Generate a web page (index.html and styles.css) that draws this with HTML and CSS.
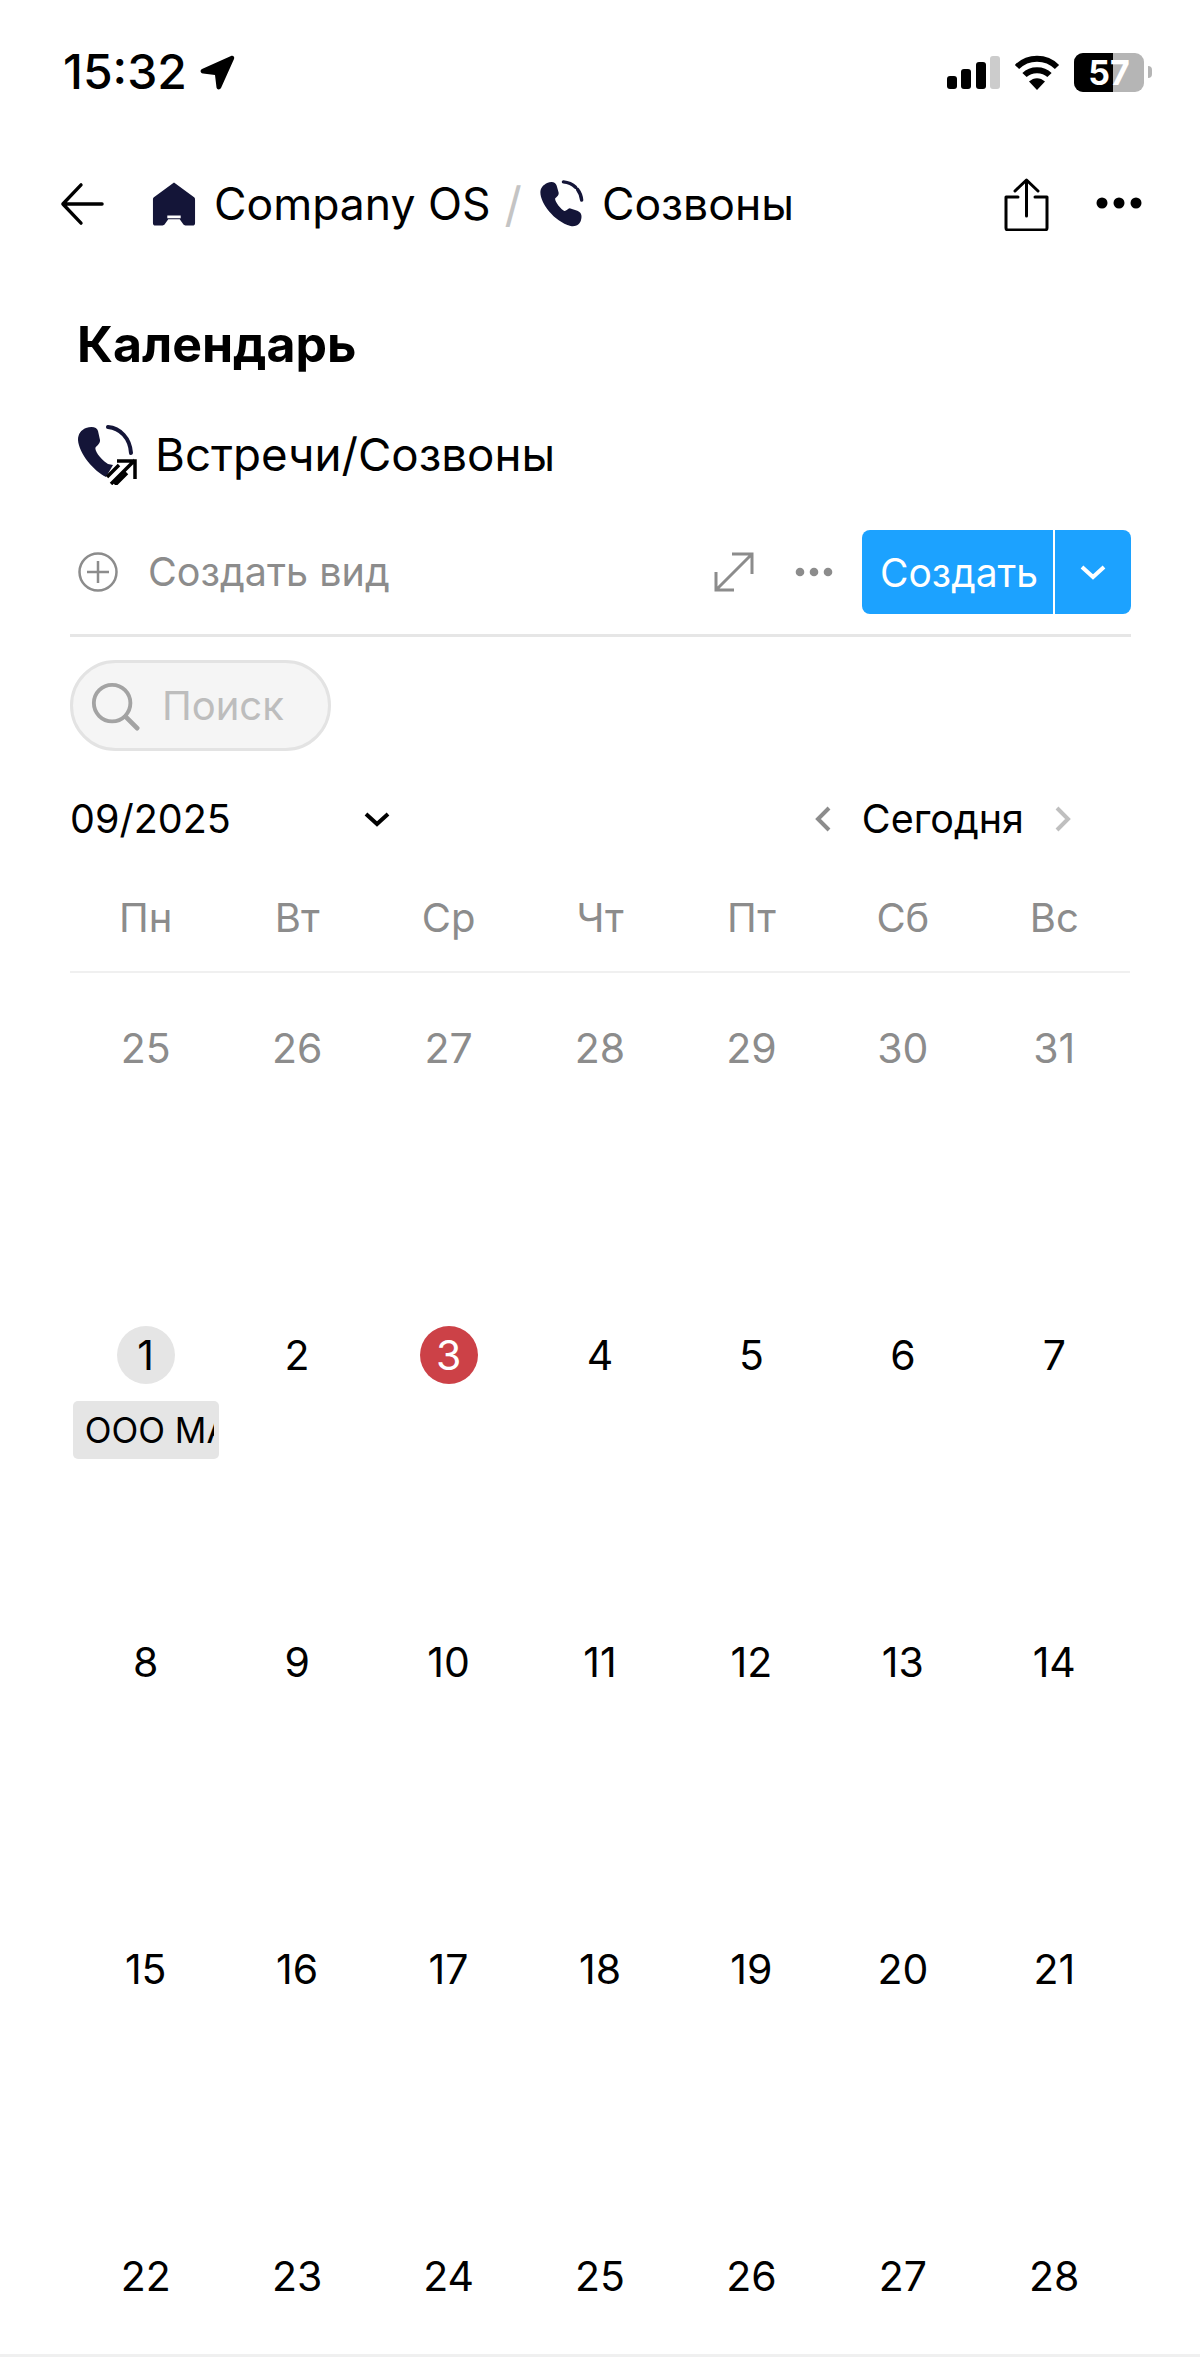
FILE: index.html
```html
<!DOCTYPE html>
<html lang="ru">

<head>
  <meta charset="UTF-8">
  <meta name="viewport" content="width=device-width, initial-scale=1.0">
  <title>Календарь</title>
  <link rel="stylesheet" href="styles.css">
</head>

<body>
  <div class="status-bar">
    <div class="status-left">
      <span class="status-time">15:32</span>
      <svg width="35" height="35" viewBox="0 0 35 35"><path d="M2 14 31 1c2-1 4 1 3 3L21 33c-1 2-4 2-4.500-.5L15 20 3 18.500C0 18 0 15 2 14Z" fill="#000"/></svg>
    </div>
    <div class="status-right">
      <svg width="53" height="33" viewBox="0 0 53 33"><rect x="0" y="20" width="10" height="13" rx="3" fill="#000"/><rect x="14" y="13" width="10" height="20" rx="3" fill="#000"/><rect x="29" y="6" width="10" height="27" rx="3" fill="#000"/><rect x="43" y="0" width="10" height="33" rx="3" fill="#ccc"/></svg>
      <svg width="48" height="36" viewBox="0 0 46 36"><path d="M3 13C14 2 32 2 43 13M10.500 21C17 14.500 29 14.500 35.500 21" fill="none" stroke="#000" stroke-width="6"/><path d="M15 27.500C20 23 26 23 31 27.500L23 36Z" fill="#000"/></svg>
      <div class="battery">
        <div class="battery-body">
          <div class="battery-fill"></div>
          <span class="battery-num">57</span>
        </div>
        <div class="battery-tip"></div>
      </div>
    </div>
  </div>

  <div class="nav-bar">
    <svg class="back-icon" width="44" height="44" viewBox="0 0 46 46"><path d="M44 23H3M22 3 3 23l19 20" fill="none" stroke="#000" stroke-width="3.500" stroke-linecap="round" stroke-linejoin="round"/></svg>
    <svg class="crumb-icon" width="44" height="44" viewBox="0 0 46 46"><path fill-rule="evenodd" d="M23 .5 44 16c.6.500 1 1.200 1 2v25c0 1.500-1 2.500-2.500 2.500H35c-1 0-1.800-.5-2.300-1.200L29 39H17l-3.700 5.300c-.5.700-1.300 1.200-2.300 1.200H3.500C2 45.500 1 44.500 1 43V18c0-.8.400-1.500 1-2L23 .5ZM16 35v3h14v-3H16Z" fill="#141538"/></svg>
    <span class="crumb-text">Company OS</span>
    <span class="crumb-sep">/</span>
    <svg class="crumb-icon" width="47" height="48" viewBox="0 0 46 50"><path d="M8 3c5-2 9-1 10 3l2 7c.5 3-2 4.500-3.500 6-1 1.500 3 9 9 13 2 1 4-2 6-2.500l8 2.500c4 1.500 5 5 4 9-1 6-6 8-11 7C15 43 1 24 1 13 1 8 4 5 8 3Z" fill="#141538"/><path d="M25 2c11 1 18 9 19 19" fill="none" stroke="#141538" stroke-width="3.500" stroke-linecap="round" stroke-dasharray="14 3 40"/></svg>
    <span class="crumb-text crumb-last">Созвоны</span>
    <div class="nav-actions">
      <svg width="45" height="53" viewBox="0 0 45 53"><path d="M22.500 38V2M11 13 22.500 2 34 13M14 19H2v31a2 2 0 0 0 2 2h37a2 2 0 0 0 2-2V19H31" fill="none" stroke="#000" stroke-width="3" stroke-linecap="round" stroke-linejoin="round"/></svg>
      <svg class="nav-dots" width="46" height="12" viewBox="0 0 46 12"><circle cx="6" cy="6" r="5.500" fill="#000"/><circle cx="23" cy="6" r="5.500" fill="#000"/><circle cx="40" cy="6" r="5.500" fill="#000"/></svg>
    </div>
  </div>

  <h1 class="page-title">Календарь</h1>

  <div class="db-title">
    <svg width="60" height="60" viewBox="0 0 60 60"><path d="M9 3c6-2 11-1 12 3l2 9c.5 3-3 6-4.500 7.500C17.500 25 22 33 31 39l5 1-7 12C17 46 2 29 1 15 1 9 4 5 9 3Z" fill="#141538"/><path d="M31 2c12 1 22 11 23 26" fill="none" stroke="#141538" stroke-width="4" stroke-linecap="round"/><path d="M34 59 58 35M40 36h18v18M30 52l12-12M38 60l12-12" fill="none" stroke="#000" stroke-width="3.500"/></svg>
    <span>Встречи/Созвоны</span>
  </div>

  <div class="toolbar">
    <svg width="40" height="40" viewBox="0 0 40 40"><circle cx="20" cy="20" r="18.500" fill="none" stroke="#8c8c8c" stroke-width="2.500"/><path d="M20 9v22M9 20h22" stroke="#8c8c8c" stroke-width="2.500"/></svg>
    <span class="toolbar-label">Создать вид</span>
    <div class="toolbar-right">
      <svg width="40" height="40" viewBox="0 0 40 40"><path d="M37 3 3 37M18 2h20v20M2 20v18h18" fill="none" stroke="#8c8c8c" stroke-width="3"/></svg>
      <svg class="toolbar-dots" width="38" height="10" viewBox="0 0 38 10"><circle cx="5" cy="5" r="4.300" fill="#8c8c8c"/><circle cx="19" cy="5" r="4.300" fill="#8c8c8c"/><circle cx="33" cy="5" r="4.300" fill="#8c8c8c"/></svg>
      <div class="create-btn">
        <span class="create-main">Создать</span>
        <span class="create-more"><svg width="26" height="16" viewBox="0 0 26 16"><path d="M2 3 13 13 24 3" fill="none" stroke="#fff" stroke-width="4"/></svg></span>
      </div>
    </div>
  </div>

  <div class="search-box">
    <svg width="50" height="50" viewBox="0 0 52 52"><circle cx="23" cy="23" r="19" fill="none" stroke="#a3a3a3" stroke-width="4"/><path d="M37 37 49 49" stroke="#a3a3a3" stroke-width="5" stroke-linecap="round"/></svg>
    <span>Поиск</span>
  </div>

  <div class="month-bar">
    <div class="month-pick">
      <span>09/2025</span>
      <svg width="26" height="16" viewBox="0 0 26 16"><path d="M2 3 13 13 24 3" fill="none" stroke="#000" stroke-width="4"/></svg>
    </div>
    <div class="month-nav">
      <svg width="16" height="26" viewBox="0 0 16 26"><path d="M14 2 3 13l11 11" fill="none" stroke="#8c8c8c" stroke-width="4"/></svg>
      <span>Сегодня</span>
      <svg width="16" height="26" viewBox="0 0 16 26"><path d="M2 2l11 11L2 24" fill="none" stroke="#bfbfbf" stroke-width="4"/></svg>
    </div>
  </div>

  <div class="week-head">
    <div>Пн</div><div>Вт</div><div>Ср</div><div>Чт</div><div>Пт</div><div>Сб</div><div>Вс</div>
  </div>

  <div class="calendar">
    <div class="day muted"><span class="num">25</span></div>
    <div class="day muted"><span class="num">26</span></div>
    <div class="day muted"><span class="num">27</span></div>
    <div class="day muted"><span class="num">28</span></div>
    <div class="day muted"><span class="num">29</span></div>
    <div class="day muted"><span class="num">30</span></div>
    <div class="day muted"><span class="num">31</span></div>

    <div class="day"><span class="num first">1</span><div class="event"><span>ООО МАРКЕТ</span></div></div>
    <div class="day"><span class="num">2</span></div>
    <div class="day"><span class="num today">3</span></div>
    <div class="day"><span class="num">4</span></div>
    <div class="day"><span class="num">5</span></div>
    <div class="day"><span class="num">6</span></div>
    <div class="day"><span class="num">7</span></div>

    <div class="day"><span class="num">8</span></div>
    <div class="day"><span class="num">9</span></div>
    <div class="day"><span class="num">10</span></div>
    <div class="day"><span class="num">11</span></div>
    <div class="day"><span class="num">12</span></div>
    <div class="day"><span class="num">13</span></div>
    <div class="day"><span class="num">14</span></div>

    <div class="day"><span class="num">15</span></div>
    <div class="day"><span class="num">16</span></div>
    <div class="day"><span class="num">17</span></div>
    <div class="day"><span class="num">18</span></div>
    <div class="day"><span class="num">19</span></div>
    <div class="day"><span class="num">20</span></div>
    <div class="day"><span class="num">21</span></div>

    <div class="day"><span class="num">22</span></div>
    <div class="day"><span class="num">23</span></div>
    <div class="day"><span class="num">24</span></div>
    <div class="day"><span class="num">25</span></div>
    <div class="day"><span class="num">26</span></div>
    <div class="day"><span class="num">27</span></div>
    <div class="day"><span class="num">28</span></div>
  </div>

  <div class="bottom-line"></div>
</body>

</html>
```

FILE: styles.css
```css
html,
body {
  margin: 0;
  padding: 0;
}

body {
  width: 1200px;
  height: 2378px;
  overflow: hidden;
  background: #fff;
  color: #000;
  font-family: 'Inter', 'Liberation Sans', sans-serif;
}

/* status bar */
.status-bar {
  display: flex;
  justify-content: space-between;
  align-items: center;
  height: 56px;
  padding: 44px 48px 0 63px;
}

.status-left {
  display: flex;
  align-items: center;
  gap: 13px;
}

.status-time {
  font-size: 48px;
  font-weight: 500;
  line-height: 56px;
}

.status-right {
  display: flex;
  align-items: center;
  gap: 13px;
}

.battery {
  display: flex;
  align-items: center;
  gap: 4px;
}

.battery-body {
  position: relative;
  width: 70px;
  height: 39px;
  border-radius: 9px;
  overflow: hidden;
  background: #b5b5b5;
}

.battery-fill {
  width: 39px;
  height: 100%;
  background: #000;
}

.battery-num {
  position: absolute;
  left: 0;
  right: 0;
  top: 0;
  text-align: center;
  color: #fff;
  font-size: 34px;
  font-weight: 700;
  line-height: 39px;
}

.battery-tip {
  width: 4px;
  height: 12px;
  border-radius: 0 4px 4px 0;
  background: #b5b5b5;
}

/* breadcrumbs */
.nav-bar {
  display: flex;
  align-items: center;
  height: 60px;
  margin-top: 74px;
  padding: 0 58px 0 60px;
}

.back-icon {
  margin-right: 48px;
}

.crumb-icon {
  flex: none;
}

.crumb-text {
  font-size: 44.500px;
  margin-left: 18px;
}

.crumb-last {
  margin-left: 17px;
}

.crumb-sep {
  font-size: 48px;
  color: #c4c4c4;
  margin: 0 16px 0 14px;
}

.nav-actions {
  display: flex;
  align-items: center;
  gap: 47px;
  margin-left: auto;
}

.nav-dots {
  margin-bottom: 3px;
}

/* titles */
.page-title {
  margin: 80px 0 0 77px;
  font-size: 50px;
  font-weight: 700;
  line-height: 60px;
}

.db-title {
  display: flex;
  align-items: center;
  gap: 18px;
  margin: 51px 0 0 77px;
  font-size: 45.700px;
  line-height: 60px;
}

/* toolbar */
.toolbar {
  display: flex;
  align-items: center;
  height: 84px;
  margin: 45px 69px 0 70px;
  padding: 0 0 20px 8px;
  border-bottom: 3px solid #e6e6e6;
}

.toolbar-label {
  margin-left: 30px;
  font-size: 39.500px;
  color: #8c8c8c;
}

.toolbar-right {
  display: flex;
  align-items: center;
  margin-left: auto;
}

.toolbar-dots {
  margin: 0 29px 0 41px;
}

.create-btn {
  display: flex;
  height: 84px;
  border-radius: 8px;
  overflow: hidden;
  color: #fff;
  background: #1ca2ff;
}

.create-main {
  display: flex;
  align-items: center;
  box-sizing: border-box;
  width: 193px;
  padding-left: 18px;
  font-size: 39px;
  border-right: 2px solid #fff;
}

.create-more {
  display: flex;
  align-items: center;
  justify-content: center;
  width: 76px;
}

/* search */
.search-box {
  display: flex;
  align-items: center;
  gap: 22px;
  box-sizing: border-box;
  width: 261px;
  height: 91px;
  margin: 23px 0 0 70px;
  padding-left: 17px;
  border: 3px solid #e3e3e3;
  border-radius: 46px;
  background: #f5f5f5;
  color: #bdbdbd;
  font-size: 40px;
}

/* month */
.month-bar {
  display: flex;
  align-items: center;
  justify-content: space-between;
  height: 60px;
  margin: 38px 70px 0 70px;
}

.month-pick {
  display: flex;
  align-items: center;
  gap: 133px;
  font-size: 39.500px;
}

.month-nav {
  display: flex;
  align-items: center;
  gap: 31px;
  margin-right: 59px;
  font-size: 39.500px;
}

/* calendar */
.week-head {
  display: grid;
  grid-template-columns: repeat(7, 1fr);
  height: 83px;
  margin: 39px 70px 0 70px;
  border-bottom: 2px solid #f0f0f0;
  color: #8c8c8c;
  font-size: 40px;
  line-height: 60px;
  text-align: center;
}

.calendar {
  display: grid;
  grid-template-columns: repeat(7, 1fr);
  grid-template-rows: repeat(4, 307px) 153px;
  margin: 0 70px;
}

.day {
  display: flex;
  flex-direction: column;
  align-items: center;
  padding-top: 46px;
  min-width: 0;
  font-size: 41px;
}

.muted {
  color: #8c8c8c;
}

.num {
  display: flex;
  align-items: center;
  justify-content: center;
  width: 58px;
  height: 58px;
  border-radius: 50%;
}

.first {
  background: #e5e5e5;
}

.today {
  background: #cc4147;
  color: #fff;
}

.event {
  box-sizing: border-box;
  width: 146px;
  height: 58px;
  margin-top: 17px;
  padding: 0 5px 0 12px;
  border-radius: 5px;
  overflow: hidden;
  background: #e5e5e5;
  font-size: 35px;
  line-height: 58px;
  white-space: nowrap;
}

.event span {
  display: block;
  overflow: hidden;
}

.bottom-line {
  height: 3px;
  background: #f0f0f0;
}
```
